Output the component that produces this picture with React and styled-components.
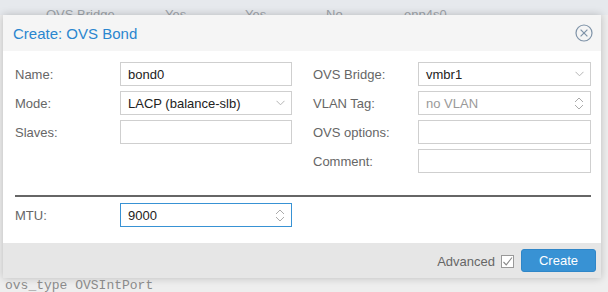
import React from 'react';
import styled, { createGlobalStyle } from 'styled-components';

const GlobalStyle = createGlobalStyle`
  body {
    margin: 0;
    font-family: "Liberation Sans", Arial, sans-serif;
    background: #eeeeee;
  }
`;

const Page = styled.div`
  width: 608px;
  height: 292px;
  overflow: hidden;
  display: flex;
  flex-direction: column;
  background: #eeeeee;
`;

const GridPeek = styled.div`
  height: 15px;
  box-sizing: border-box;
  padding-top: 7px;
  overflow: hidden;
  display: grid;
  grid-template-columns: 46px 119px 80px 81px 78px auto;
  background: #e6e9ed;
  font-size: 13px;
  line-height: 15px;
  color: #9ea4aa;
`;

const Dialog = styled.div`
  margin-left: 3px;
  width: 598px;
  height: 263px;
  flex-shrink: 0;
  display: flex;
  flex-direction: column;
  background: #fff;
  box-shadow: 0 0 8px rgba(0, 0, 0, 0.22);
`;

const Header = styled.div`
  height: 36px;
  flex-shrink: 0;
  display: flex;
  align-items: center;
  justify-content: space-between;
  padding: 0 8px 0 10px;
  background: #f5f5f5;
`;

const Title = styled.div`
  font-size: 15px;
  color: #2a86cf;
`;

const Body = styled.div`
  flex: 1;
  padding: 11px 10px 0 12px;
`;

const Columns = styled.div`
  display: grid;
  grid-template-columns: 277px 278px;
  column-gap: 21px;
  align-items: start;
`;

const Column = styled.div`
  display: flex;
  flex-direction: column;
  gap: 5px;
`;

const Row = styled.div`
  display: grid;
  grid-template-columns: 105px 1fr;
  align-items: center;
  height: 24px;
  margin-top: ${p => p.$top || 0}px;
`;

const Label = styled.div`
  font-size: 13px;
  color: #666;
`;

const Field = styled.div`
  height: 24px;
  box-sizing: border-box;
  border: 1px solid ${p => (p.$focus ? '#3892d4' : '#cfcfcf')};
  display: flex;
  align-items: center;
  justify-content: space-between;
  padding: 0 6px 0 7px;
  font-size: 13px;
  color: ${p => (p.$placeholder ? '#999' : '#222')};
`;

const Separator = styled.div`
  margin-top: 22px;
  border-top: 2px solid #666;
`;

const Footer = styled.div`
  height: 35px;
  flex-shrink: 0;
  display: flex;
  align-items: center;
  justify-content: flex-end;
  padding-right: 5px;
  background: #e6e6e6;
`;

const AdvLabel = styled.label`
  display: flex;
  align-items: center;
  gap: 6px;
  font-size: 13px;
  color: #666;
  margin-right: 7px;
  padding-top: 2px;
`;

const CheckBox = styled.span`
  width: 13px;
  height: 13px;
  box-sizing: border-box;
  border: 1px solid #999;
  display: flex;
  align-items: center;
  justify-content: center;
  background: #fff;
`;

const Button = styled.button`
  width: 75px;
  height: 23px;
  border: 1px solid #2f86c8;
  border-radius: 3px;
  background: #3892d4;
  color: #fff;
  font-family: inherit;
  font-size: 13px;
  padding: 0;
`;

const BottomText = styled.div`
  padding: 1px 0 0 5px;
  font-family: "Liberation Mono", "DejaVu Sans Mono", monospace;
  font-size: 13px;
  line-height: 13px;
  color: #8a8a8a;
`;

const Chevron = () => (
  <svg width="9" height="6" viewBox="0 0 9 6">
    <path d="M0.5 0.8 L4.5 4.8 L8.5 0.8" fill="none" stroke="#b5b5b5" strokeWidth="1" />
  </svg>
);

const Spinner = () => (
  <svg width="10" height="15" viewBox="0 0 10 15">
    <path d="M1 6 L5 2 L9 6" fill="none" stroke="#aaa" strokeWidth="1" />
    <path d="M1 9 L5 13 L9 9" fill="none" stroke="#aaa" strokeWidth="1" />
  </svg>
);

const CloseTool = () => (
  <svg width="18" height="18" viewBox="0 0 18 18">
    <circle cx="9" cy="9" r="8" fill="none" stroke="#7f93a8" strokeWidth="1.2" />
    <path d="M5.6 5.6 L12.4 12.4 M12.4 5.6 L5.6 12.4" stroke="#7f93a8" strokeWidth="1.2" />
  </svg>
);

const left = [
  { label: 'Name:', value: 'bond0' },
  { label: 'Mode:', value: 'LACP (balance-slb)', trigger: <Chevron /> },
  { label: 'Slaves:', value: '' },
];

const right = [
  { label: 'OVS Bridge:', value: 'vmbr1', trigger: <Chevron /> },
  { label: 'VLAN Tag:', value: 'no VLAN', placeholder: true, trigger: <Spinner /> },
  { label: 'OVS options:', value: '' },
  { label: 'Comment:', value: '' },
];

const FormRow = ({ item }) => (
  <Row>
    <Label>{item.label}</Label>
    <Field $placeholder={item.placeholder}>
      <span>{item.value}</span>
      {item.trigger}
    </Field>
  </Row>
);

export default function App() {
  return (
    <Page>
      <GlobalStyle />
      <GridPeek>
        <span />
        <span>OVS Bridge</span>
        <span>Yes</span>
        <span>Yes</span>
        <span>No</span>
        <span>enp4s0</span>
      </GridPeek>
      <Dialog>
        <Header>
          <Title>Create: OVS Bond</Title>
          <CloseTool />
        </Header>
        <Body>
          <Columns>
            <Column>
              {left.map(item => <FormRow key={item.label} item={item} />)}
            </Column>
            <Column>
              {right.map(item => <FormRow key={item.label} item={item} />)}
            </Column>
          </Columns>
          <Separator />
          <Columns>
            <Row $top={6}>
              <Label>MTU:</Label>
              <Field $focus>
                <span>9000</span>
                <Spinner />
              </Field>
            </Row>
          </Columns>
        </Body>
        <Footer>
          <AdvLabel>
            Advanced
            <CheckBox>
              <svg width="11" height="11" viewBox="0 0 11 11">
                <path d="M1.5 6 L4.2 8.8 L10 1.5" fill="none" stroke="#888" strokeWidth="1.1" />
              </svg>
            </CheckBox>
          </AdvLabel>
          <Button>Create</Button>
        </Footer>
      </Dialog>
      <BottomText>ovs_type OVSIntPort</BottomText>
    </Page>
  );
}
